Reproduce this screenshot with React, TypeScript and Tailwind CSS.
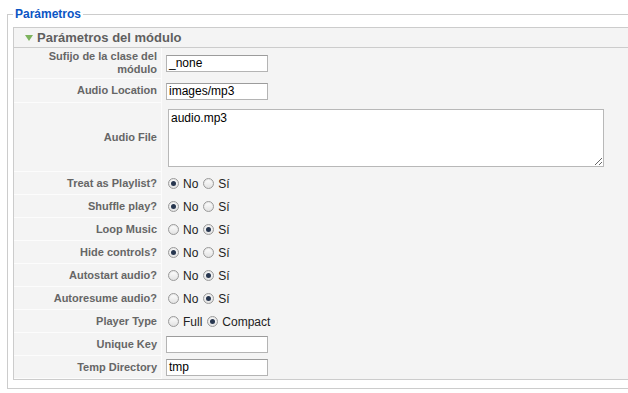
import React from "react";

type Row =
  | { label: string[]; kind: "text"; value: string; h: string }
  | { label: string[]; kind: "area"; value: string; h: string }
  | { label: string[]; kind: "radio"; options: string[]; checked: number; h: string };

const rows: Row[] = [
  { label: ["Sufijo de la clase del", "módulo"], kind: "text", value: "_none", h: "h-[31px]" },
  { label: ["Audio Location"], kind: "text", value: "images/mp3", h: "h-[24px]" },
  { label: ["Audio File"], kind: "area", value: "audio.mp3", h: "h-[69px]" },
  { label: ["Treat as Playlist?"], kind: "radio", options: ["No", "Sí"], checked: 0, h: "h-[23px]" },
  { label: ["Shuffle play?"], kind: "radio", options: ["No", "Sí"], checked: 0, h: "h-[23px]" },
  { label: ["Loop Music"], kind: "radio", options: ["No", "Sí"], checked: 1, h: "h-[23px]" },
  { label: ["Hide controls?"], kind: "radio", options: ["No", "Sí"], checked: 0, h: "h-[23px]" },
  { label: ["Autostart audio?"], kind: "radio", options: ["No", "Sí"], checked: 1, h: "h-[23px]" },
  { label: ["Autoresume audio?"], kind: "radio", options: ["No", "Sí"], checked: 1, h: "h-[23px]" },
  { label: ["Player Type"], kind: "radio", options: ["Full", "Compact"], checked: 1, h: "h-[23px]" },
  { label: ["Unique Key"], kind: "text", value: "", h: "h-[23px]" },
  { label: ["Temp Directory"], kind: "text", value: "tmp", h: "h-[23px]" },
];

function Radio({ on }: { on: boolean }) {
  return (
    <span className="flex h-[11px] w-[11px] items-center justify-center rounded-full border border-[#9a9a9a] bg-gradient-to-b from-[#ffffff] to-[#e2e2e2] shadow-[inset_0_1px_1px_rgba(0,0,0,0.1)]">
      {on && <span className="h-[5px] w-[5px] rounded-full bg-[#27364f]" />}
    </span>
  );
}

function Value({ row }: { row: Row }) {
  if (row.kind === "text") {
    return (
      <div className="h-[17px] w-[102px] border border-[#b4b4b4] border-t-[#9c9c9c] bg-white pl-[2px] text-[12px] leading-[15px] text-black">
        {row.value}
      </div>
    );
  }
  if (row.kind === "area") {
    return (
      <textarea
        readOnly
        defaultValue={row.value}
        className="ml-[2px] h-[58px] w-[436px] resize border border-[#b8b8b8] bg-white px-[2px] pt-[1px] text-[12px] leading-[15px] text-black outline-none"
      />
    );
  }
  return (
    <div className="flex items-center pl-[2px] text-[12px] text-[#222]">
      {row.options.map((o, i) => (
        <div key={o} className="flex items-center">
          <Radio on={row.checked === i} />
          <span className="ml-[4px] mr-[5px]">{o}</span>
        </div>
      ))}
    </div>
  );
}

export default function App() {
  return (
    <div className="h-[393px] w-[628px] overflow-hidden bg-white font-['Liberation_Sans',Arial,sans-serif]">
      <fieldset className="ml-[7px] mt-[7px] w-[640px] border border-[#cccccc] pb-[8px] pl-[5px] pt-[6px]">
        <legend className="px-[2px] text-[12px] font-bold leading-[14px] text-[#0b55c4]">
          Parámetros
        </legend>
        <div className="border border-[#cccccc] bg-[#f4f4f4]">
          <div className="flex h-[20px] items-center border-b border-[#cccccc] pl-[11px]">
            <svg width="8" height="6" viewBox="0 0 8 6" className="mt-[1px]">
              <path d="M0 0 H8 L4 6 Z" fill="#7db35e" />
            </svg>
            <span className="ml-[4px] text-[13px] font-bold text-[#5f5f5f]">Parámetros del módulo</span>
          </div>
          <div className="grid grid-cols-[148px_1fr]">
            {rows.map((row) => (
              <React.Fragment key={row.label.join(" ")}>
                <div
                  className={`${row.h} flex flex-col items-end justify-center border-b border-r border-[#fcfcfc] pr-[4px] text-right text-[11px] font-bold leading-[13px] text-[#666666]`}
                >
                  {row.label.map((l) => (
                    <span key={l}>{l}</span>
                  ))}
                </div>
                <div className={`${row.h} flex items-center pl-[4px]`}>
                  <Value row={row} />
                </div>
              </React.Fragment>
            ))}
          </div>
        </div>
      </fieldset>
    </div>
  );
}
